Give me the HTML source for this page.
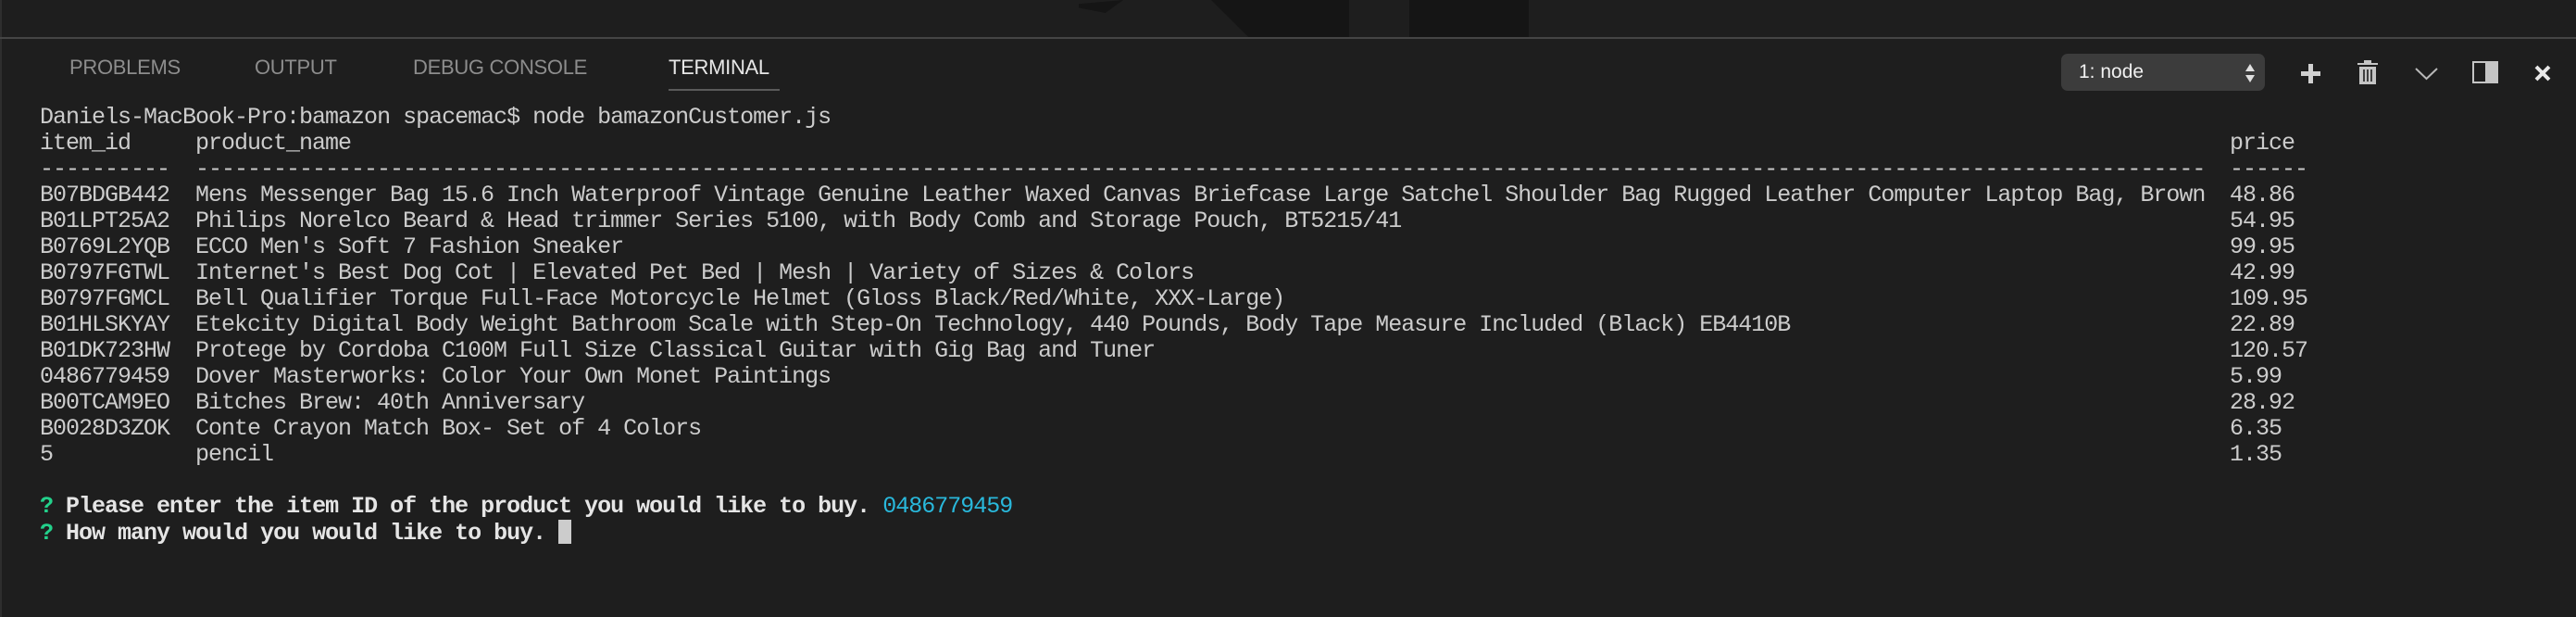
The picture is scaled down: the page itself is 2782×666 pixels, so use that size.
<!DOCTYPE html>
<html><head><meta charset="utf-8"><style>
html,body{margin:0;padding:0;background:#1e1e1e;}
body{width:2782px;height:666px;position:relative;overflow:hidden;}
.lb{position:absolute;left:0;top:0;width:2px;height:666px;background:#2e2e2e;}
.topline{position:absolute;left:0;top:40px;width:2782px;height:2px;background:#454545;}
.sh{position:absolute;background:#151515;}
.tab{position:absolute;top:60px;font-family:"Liberation Sans",sans-serif;font-size:22px;color:#8d8d8d;letter-spacing:-0.3px;line-height:26px;}
.tab.act{color:#e7e7e7;}
.ul{position:absolute;left:722px;top:96px;width:120px;height:2px;background:#5a5a5a;}
pre{position:absolute;top:113px;margin:0;font-family:"Liberation Mono",monospace;font-size:25px;letter-spacing:-1px;line-height:28px;color:#cccccc;}
.g{color:#23d18b;font-weight:bold}
.b{font-weight:bold;color:#e5e5e5}
.c{color:#29b8db}
.cur{display:inline-block;width:14px;height:26px;background:#cccccc;vertical-align:-5px;}
.sel{position:absolute;left:2226px;top:58px;width:220px;height:40px;background:#3c3c3c;border-radius:7px;}
.sel span{position:absolute;left:19px;top:8px;font-family:"Liberation Sans",sans-serif;font-size:21px;color:#f0f0f0;}
svg{position:absolute;}
</style></head><body>
<div class="lb"></div>
<div class="sh" style="left:1165px;top:0;width:48px;height:14px;clip-path:polygon(0 30%,100% 0,60% 100%,0 60%)"></div>
<div class="sh" style="left:1308px;top:0;width:149px;height:40px;clip-path:polygon(0 0,100% 0,100% 100%,27% 100%)"></div>
<div class="sh" style="left:1522px;top:0;width:129px;height:40px;"></div>
<div class="topline"></div>
<div class="tab" style="left:75px">PROBLEMS</div>
<div class="tab" style="left:275px">OUTPUT</div>
<div class="tab" style="left:446px">DEBUG CONSOLE</div>
<div class="tab act" style="left:722px">TERMINAL</div>
<div class="ul"></div>
<div class="sel"><span>1: node</span>
<svg style="left:198px;top:10px" width="12" height="22" viewBox="0 0 12 22"><path d="M6 1 L11 9 H1 Z M6 21 L11 13 H1 Z" fill="#e0e0e0"/></svg></div>
<svg style="left:2485px;top:69px" width="21" height="21" viewBox="0 0 21 21"><path d="M8 0h5v8h8v5h-8v8h-5v-8h-8v-5h8z" fill="#d0d0d0"/></svg>
<svg style="left:2546px;top:64px" width="22" height="28" viewBox="0 0 22 28"><path d="M7 1h8v3h7v2H0V4h7z M2 8h18v19H2z" fill="#c5c5c5"/><path d="M7 11v13M11 11v13M15 11v13" stroke="#1e1e1e" stroke-width="1.6"/></svg>
<svg style="left:2608px;top:72px" width="25" height="15" viewBox="0 0 25 15"><path d="M1 2l11.5 11L24 2" fill="none" stroke="#b8b8b8" stroke-width="2"/></svg>
<svg style="left:2670px;top:66px" width="28" height="24" viewBox="0 0 28 24"><rect x="1" y="1" width="26" height="22" fill="none" stroke="#c5c5c5" stroke-width="2"/><rect x="14" y="1" width="13" height="22" fill="#c5c5c5"/></svg>
<svg style="left:2737px;top:70px" width="18" height="18" viewBox="0 0 18 18"><path d="M2 2L16 16M16 2L2 16" stroke="#e8e8e8" stroke-width="4"/></svg>
<pre style="left:43px">Daniels-MacBook-Pro:bamazon spacemac$ node bamazonCustomer.js
item_id
----------
B07BDGB442
B01LPT25A2
B0769L2YQB
B0797FGTWL
B0797FGMCL
B01HLSKYAY
B01DK723HW
0486779459
B00TCAM9EO
B0028D3ZOK
5

<span class="g">?</span> <span class="b">Please enter the item ID of the product you would like to buy.</span> <span class="c">0486779459</span>
<span class="g">?</span> <span class="b">How many would you would like to buy.</span> <span class="cur"></span></pre>
<pre style="left:211px;top:141px">product_name
-----------------------------------------------------------------------------------------------------------------------------------------------------------
Mens Messenger Bag 15.6 Inch Waterproof Vintage Genuine Leather Waxed Canvas Briefcase Large Satchel Shoulder Bag Rugged Leather Computer Laptop Bag, Brown
Philips Norelco Beard &amp; Head trimmer Series 5100, with Body Comb and Storage Pouch, BT5215/41
ECCO Men's Soft 7 Fashion Sneaker
Internet's Best Dog Cot | Elevated Pet Bed | Mesh | Variety of Sizes &amp; Colors
Bell Qualifier Torque Full-Face Motorcycle Helmet (Gloss Black/Red/White, XXX-Large)
Etekcity Digital Body Weight Bathroom Scale with Step-On Technology, 440 Pounds, Body Tape Measure Included (Black) EB4410B
Protege by Cordoba C100M Full Size Classical Guitar with Gig Bag and Tuner
Dover Masterworks: Color Your Own Monet Paintings
Bitches Brew: 40th Anniversary
Conte Crayon Match Box- Set of 4 Colors
pencil</pre>
<pre style="left:2408px;top:141px">price
------
48.86
54.95
99.95
42.99
109.95
22.89
120.57
5.99
28.92
6.35
1.35</pre>
</body></html>
